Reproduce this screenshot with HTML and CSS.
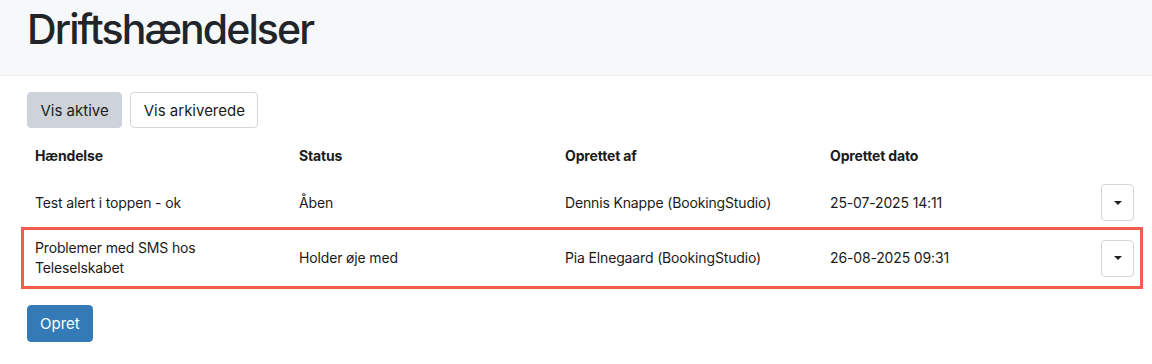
FILE: index.html
```html
<!doctype html>
<html>
<head>
	<meta charset="utf-8"/>
	<title>Driftshændelser</title>
	<link rel="stylesheet" href="styles.css">
</head>
<body>
	<div class="page-header">
		<h1>Driftshændelser</h1>
	</div>

	<div class="content">
		<div class="filter">
			<button class="btn btn-active">Vis aktive</button>
			<button class="btn">Vis arkiverede</button>
		</div>

		<div class="list">
			<div class="row head">
				<div class="cell">Hændelse</div>
				<div class="cell">Status</div>
				<div class="cell">Oprettet af</div>
				<div class="cell">Oprettet dato</div>
				<div class="cell"></div>
			</div>
			<div class="row">
				<div class="cell">Test alert i toppen - ok</div>
				<div class="cell">Åben</div>
				<div class="cell">Dennis Knappe (BookingStudio)</div>
				<div class="cell">25-07-2025 14:11</div>
				<div class="cell actions"><button class="caret-btn"><span class="caret"></span></button></div>
			</div>
			<div class="row marked">
				<div class="cell">Problemer med SMS hos<br>Teleselskabet</div>
				<div class="cell">Holder øje med</div>
				<div class="cell">Pia Elnegaard (BookingStudio)</div>
				<div class="cell">26-08-2025 09:31</div>
				<div class="cell actions"><button class="caret-btn"><span class="caret"></span></button></div>
			</div>
		</div>

		<button class="btn btn-primary">Opret</button>
	</div>
</body>
</html>
```

FILE: styles.css
```css
body {
	margin: 0;
	font-family: Inter, "Noto Sans", sans-serif;
	color: #1b1b1b;
	background: #fff;
}
.page-header {
	height: 76px;
	background-color: #f7f8f9;
	border-bottom: 1px solid #eceef0;
	box-sizing: border-box;
	padding: 0 27px;
}
h1 {
	margin: 0;
	font-size: 41px;
	font-weight: 500;
	line-height: 59px;
	color: #212529;
	letter-spacing: -1.9px;
}
.content {
	padding: 16px 27px 0;
}
.filter {
	display: flex;
	gap: 8px;
}
.btn {
	font-family: inherit;
	font-size: 15px;
	height: 36px;
	padding: 0 12.5px;
	border: 1px solid #d3d6da;
	border-radius: 4px;
	background-color: #fff;
	color: #1b1b1b;
	cursor: pointer;
}
.btn-active {
	background-color: #ced3da;
	border-color: #ced3da;
}
.btn-primary {
	background-color: #337ab7;
	border-color: #337ab7;
	color: #fff;
	height: 37px;
	padding: 0 12px;
	margin-top: 16px;
}
.list {
	width: 1115px;
	margin-top: 4px;
	font-size: 14px;
	letter-spacing: -0.15px;
}
.row {
	display: grid;
	grid-template-columns: 264px 266px 265px 265px 1fr;
	align-items: center;
	height: 47px;
	line-height: 20px;
}
.row.head {
	font-weight: 700;
}
.cell {
	padding: 0 8px;
}
.actions {
	display: flex;
	justify-content: flex-end;
}
.row.marked {
	height: 62px;
	border: 3px solid #f25d4e;
	box-sizing: border-box;
	margin: 1px -1px 0 -6px;
	padding-left: 3px;
}
.row.marked .actions {
	padding-right: 6px;
}
.caret-btn {
	width: 33px;
	height: 37px;
	border: 1px solid #d3d6da;
	border-radius: 4px;
	background: #fff;
	display: flex;
	align-items: center;
	justify-content: center;
	padding: 0;
	cursor: pointer;
}
.caret {
	width: 0;
	height: 0;
	border-left: 4px solid transparent;
	border-right: 4px solid transparent;
	border-top: 4px solid #222;
}
```
